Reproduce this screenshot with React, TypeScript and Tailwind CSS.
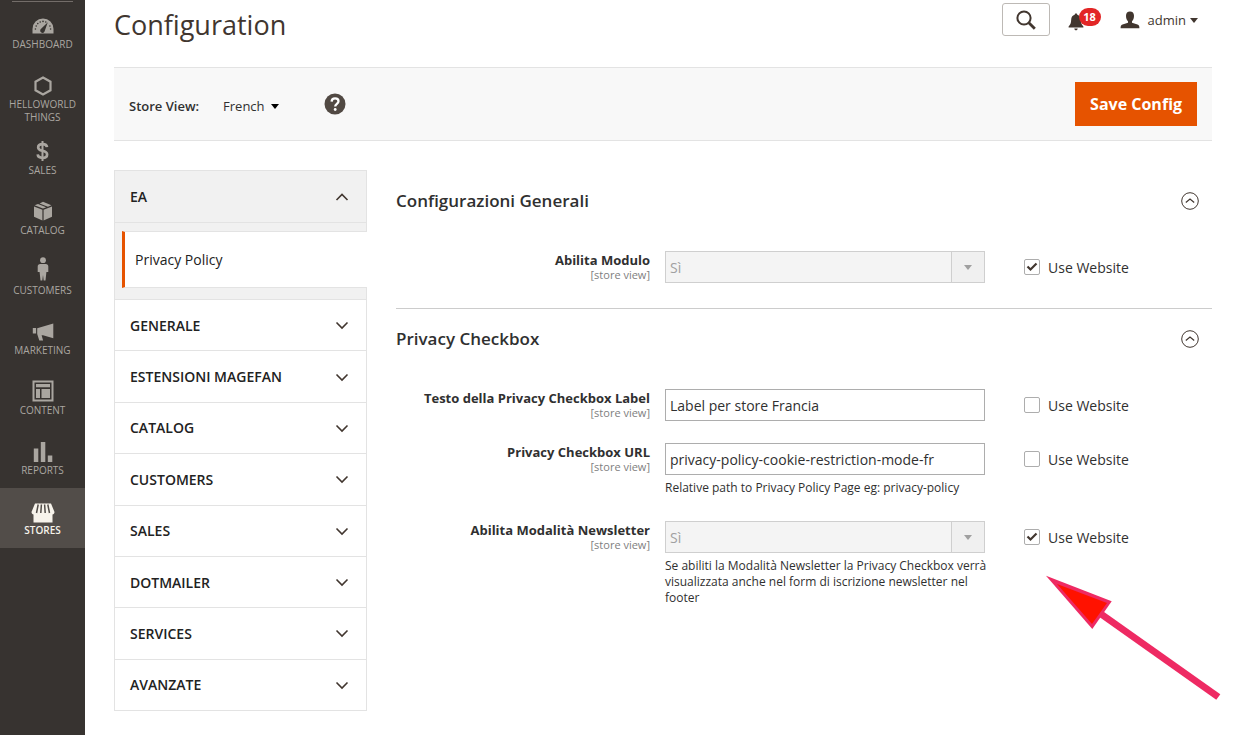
import { useState } from "react";
import type { ReactNode } from "react";
import clsx from "clsx";

const DashboardIcon = () => (
  <svg width="22" height="16" viewBox="0 0 22 16" fill="currentColor">
    <path d="M11 0.5A10.5 10.5 0 0 0 .5 11v4.5h21V11A10.5 10.5 0 0 0 11 .5z" />
    <g fill="#373330">
      <circle cx="3.4" cy="11" r="0.8" />
      <circle cx="4.2" cy="8" r="0.8" />
      <circle cx="5.8" cy="5.6" r="0.8" />
      <circle cx="8.2" cy="4" r="0.8" />
      <circle cx="11" cy="3.4" r="0.8" />
      <circle cx="13.8" cy="4" r="0.8" />
      <circle cx="17.9" cy="8" r="0.8" />
      <circle cx="18.6" cy="11" r="0.8" />
      <path d="M15.8 4.2L9.4 10.6a2.3 2.3 0 1 0 3.4 2.2z" />
    </g>
  </svg>
);

const HexagonIcon = () => (
  <svg width="18" height="20" viewBox="0 0 18 20" fill="none" stroke="currentColor" strokeWidth="2.2">
    <path d="M9 1.5L16.5 5.7v8.6L9 18.5 1.5 14.3V5.7z" />
  </svg>
);

const DollarIcon = () => (
  <svg width="13" height="22" viewBox="0 0 13 22" fill="none" stroke="currentColor">
    <path d="M11 6.2C10.8 4 9 3.2 6.6 3.2 4 3.2 2.2 4.4 2.2 6.4c0 2.2 2 2.8 4.3 3.4 2.6.6 4.6 1.3 4.6 3.6 0 2.1-1.9 3.4-4.5 3.4S1.9 15.8 1.7 13.4" strokeWidth="2.7" />
    <path d="M6.500 0v20" strokeWidth="2" />
  </svg>
);

const CatalogIcon = () => (
  <svg width="20" height="22" viewBox="0 0 20 22" fill="currentColor">
    <path d="M1 5.500l8.400 3.300v10.700L1 15.700zM19 5.500l-8.400 3.300v10.700l8.400-3.800z" />
    <path d="M1.600 4.300L5 3l8.200 3.300L10 7.600zM6.600 2.400L10 .8l8.400 3.500-3.500 1.400z" />
  </svg>
);

const CustomersIcon = () => (
  <svg width="12" height="30" viewBox="0 0 12 30" fill="currentColor">
    <circle cx="6" cy="3.200" r="2.900" />
    <path d="M3.200 7h5.600C10.400 7 11.300 8 11.300 9.600V15H9.400l-.9 8.500H6.700L6 18l-.7 5.500H3.500L2.600 15H.7V9.600C.7 8 1.600 7 3.200 7z" />
  </svg>
);

const MarketingIcon = () => (
  <svg width="22" height="18" viewBox="0 0 22 18" fill="currentColor">
    <path d="M21.300.6v14.600L11 12.200H9.600l1.500 5.200H7.300L5.200 11V5.300zM.8 5h3.300v5.500H.8z" />
  </svg>
);

const ContentIcon = () => (
  <svg width="22" height="24" viewBox="0 0 22 24" fill="currentColor">
    <path fillRule="evenodd" d="M.5.500h21v21H.5zM2.500 2.500v17h17v-17z" />
    <path d="M4 4h14v3.200H4zM4 9h4v9H4zM9.500 9H18v9H9.500z" />
  </svg>
);

const ReportsIcon = () => (
  <svg width="20" height="22" viewBox="0 0 20 22" fill="currentColor">
    <path d="M.8 7.500h4.500V21H.8zM7.800 1h4.500v20H7.800zM14.800 14.500h4.500V21h-4.500z" />
  </svg>
);

const StoresIcon = () => (
  <svg width="24" height="22" viewBox="0 -2 24 22" fill="currentColor">
    <path d="M4 .5h16L23.500 9c0 1.500-1 2.400-2 2.500v8h-19v-8C1.500 11.400.5 10.500.5 9z" />
    <path d="M7.200 1.500L5.500 10M10.400 1.500L9.800 10M13.600 1.500l.6 8.500M16.800 1.500l1.700 8.500" stroke="#524d49" strokeWidth="1.500" />
  </svg>
);

const Chevron = ({ up = false }: { up?: boolean }) => (
  <svg width="14" height="14" viewBox="0 0 14 14" fill="none" stroke="#41362f" strokeWidth="1.600" aria-hidden="true">
    <path d={up ? "M1.500 10L7 4.500 12.500 10" : "M1.500 4.500L7 10l5.500-5.500"} />
  </svg>
);

const Caret = ({ className }: { className?: string }) => (
  <svg width="8" height="8" viewBox="0 0 8 8" fill="currentColor" className={className} aria-hidden="true">
    <path d="M0 2h8L4 7z" />
  </svg>
);

const menu = [
  { label: "Dashboard", icon: <DashboardIcon /> },
  { label: "Helloworld Things", icon: <HexagonIcon /> },
  { label: "Sales", icon: <DollarIcon /> },
  { label: "Catalog", icon: <CatalogIcon /> },
  { label: "Customers", icon: <CustomersIcon /> },
  { label: "Marketing", icon: <MarketingIcon /> },
  { label: "Content", icon: <ContentIcon /> },
  { label: "Reports", icon: <ReportsIcon /> },
  { label: "Stores", icon: <StoresIcon />, active: true },
];

const tabs = [
  "Generale",
  "Estensioni Magefan",
  "Catalog",
  "Customers",
  "Sales",
  "Dotmailer",
  "Services",
  "Avanzate",
];

const Sidebar = () => (
  <nav className="w-[85px] shrink-0 bg-[#373330] pt-px">
    <div className="mx-3 border-t border-[#736d69]" />
    {menu.map((item) => (
      <a
        key={item.label}
        href="#"
        className={clsx(
          "flex min-h-[60px] flex-col items-center pt-3 pb-1 text-center text-[10px] leading-[13px] uppercase",
          item.active ? "bg-[#524d49] font-semibold text-[#f7f3eb]" : "font-medium text-[#aaa6a0]"
        )}
      >
        <span className="flex h-6 items-center">{item.icon}</span>
        <span className="px-1">{item.label}</span>
      </a>
    ))}
  </nav>
);

const Header = () => (
  <header className="flex h-[67px] items-start justify-between">
    <h1 className="pt-1 text-[27px] leading-[42px] text-[#41362f]">Configuration</h1>
    <div className="flex h-[39px] items-center pr-[14px]">
      <button
        aria-label="Search"
        className="flex h-[33px] w-12 items-center justify-center rounded-[3px] border border-[#bdb9b5]"
      >
        <svg width="20" height="20" viewBox="0 0 20 20" fill="none" stroke="#41362f">
          <circle cx="8" cy="8" r="6.600" strokeWidth="2" />
          <path d="M12.800 12.800l6 6" strokeWidth="2.800" />
        </svg>
      </button>
      <button aria-label="Notifications" className="relative ml-[18px] h-8 w-[33px]">
        <svg width="16" height="18" viewBox="0 0 16 18" fill="#41362f" className="mt-1">
          <path d="M8 .5c-.8 0-1.300.5-1.300 1.200C4.300 2.300 3.200 4.200 3.200 6.500 3.200 10.500 2 12 .6 13.400V14.500h14.800v-1.100C14 12 12.800 10.500 12.800 6.500c0-2.300-1.100-4.200-3.500-4.800C9.300 1 8.800.500 8 .500zM6.300 15.500h3.400C9.600 16.700 9 17.300 8 17.300s-1.600-.6-1.700-1.800z" />
        </svg>
        <span className="absolute top-1 right-0 h-[18px] w-[22px] rounded-full bg-[#e22626] text-center text-[11px] leading-[18px] font-bold text-white">
          18
        </span>
      </button>
      <button className="ml-[19px] flex items-center text-[13px] leading-5 text-[#41362f]">
        <svg width="20" height="18" viewBox="0 0 20 18" fill="currentColor" className="mr-2">
          <path d="M10 .5c-2.500 0-4 1.500-4 4.200 0 2.300.7 4.300 2 5.500v1.600L2.500 13.500C1 14 .6 14.800.6 17.200h18.800c0-2.400-.4-3.200-1.900-3.700L12 11.800v-1.600c1.300-1.200 2-3.200 2-5.500C14 2 12.500.500 10 .500z" />
        </svg>
        admin
        <Caret className="ml-1" />
      </button>
    </div>
  </header>
);

const StoreBar = () => (
  <div className="flex h-[74px] items-center border-y border-[#e3e3e3] bg-[#f8f8f8] px-[15px]">
    <div className="flex items-center pt-1 text-[13px] leading-5 text-[#303030]">
      <label htmlFor="store-view" className="font-semibold">
        Store View:
      </label>
      <div className="relative ml-6 flex items-center">
        <select id="store-view" className="appearance-none pr-[14px]">
          <option>French</option>
        </select>
        <Caret className="pointer-events-none absolute right-0 text-black" />
      </div>
    </div>
    <button aria-label="Help" className="ml-[45px]">
      <svg width="22" height="22" viewBox="0 0 22 22" fill="none">
        <circle cx="11" cy="11" r="10.500" fill="#514943" />
        <path d="M7.600 8.600C7.700 6.500 9 5.300 11.100 5.300c2.100 0 3.400 1.100 3.400 2.900 0 2.600-3.300 2.700-3.300 5.300" stroke="#fff" strokeWidth="2.300" />
        <circle cx="11.200" cy="16.500" r="1.400" fill="#fff" />
      </svg>
    </button>
    <button className="ml-auto h-11 bg-[#e65300] px-[15px] text-base font-bold text-white">
      Save Config
    </button>
  </div>
);

const ConfigTabs = () => (
  <nav className="w-[253px] shrink-0 text-[#222222]">
    <div className="border-x border-t border-[#e3e3e3] bg-[#f1f1f1]">
      <button className="flex h-[52px] w-full items-center justify-between border-b border-[#e3e3e3] pr-[17px] pl-[15px] text-[14px] font-semibold">
        EA
        <Chevron up />
      </button>
      <div className="-mr-px pt-2 pb-[11px] pl-[7px]">
        <a
          href="#"
          className="flex h-[57px] items-center border-y border-l-[3px] border-y-[#e3e3e3] border-l-[#e65300] bg-white pl-[10px] text-[14px] font-medium"
        >
          Privacy Policy
        </a>
      </div>
    </div>
    <div className="flex min-h-[412px] flex-col divide-y divide-[#e3e3e3] border border-[#e3e3e3]">
      {tabs.map((tab) => (
        <button
          key={tab}
          className="flex min-h-12 flex-1 items-center justify-between pr-[17px] pl-[15px] text-[14px] font-semibold uppercase"
        >
          {tab}
          <Chevron />
        </button>
      ))}
    </div>
  </nav>
);

const Section = ({ title, children }: { title: string; children: ReactNode }) => (
  <section>
    <div className="flex items-center justify-between pr-[13px]">
      <h2 className="text-[17px] leading-6 font-semibold text-[#303030]">{title}</h2>
      <button aria-label={`Collapse ${title}`}>
        <svg width="18" height="18" viewBox="0 0 18 18" fill="none" stroke="#41362f">
          <circle cx="9" cy="9" r="8.300" />
          <path d="M4.800 10.500L9 7l4.200 3.500" strokeWidth="1.200" />
        </svg>
      </button>
    </div>
    <div className="mt-[38px] flex flex-col gap-[22px]">{children}</div>
  </section>
);

type FieldProps = {
  id: string;
  label: string;
  value: string;
  type: "select" | "text";
  inherit?: boolean;
  note?: string;
  children?: ReactNode;
};

const Field = ({ id, label, value, type, inherit = false, note, children }: FieldProps) => {
  const [checked, setChecked] = useState(inherit);

  return (
    <div className="grid grid-cols-[269fr_359fr_188fr] text-[#303030]">
      <div className="pr-[15px] text-right">
        <label htmlFor={id} className="block text-[13px] leading-[18px] font-bold">
          {label}
        </label>
        <span className="block text-[11px] leading-3 text-[#808080]">[store view]</span>
      </div>
      <div className="pr-[39px]">
        {type === "select" ? (
          <div className="relative text-[#a0a0a0]">
            <select
              id={id}
              disabled={checked}
              className="h-8 w-full appearance-none border border-[#cfcfcf] bg-[#f4f4f4] pl-1 text-[14px]"
            >
              <option>{value}</option>
            </select>
            <span className="pointer-events-none absolute inset-y-px right-px flex w-[33px] items-center justify-center border-l border-[#cfcfcf] bg-[#f0f0f0]">
              <Caret />
            </span>
          </div>
        ) : (
          <input
            id={id}
            type="text"
            defaultValue={value}
            className="block h-8 w-full border border-[#adadad] bg-white pl-1 text-[14px]"
          />
        )}
        {note && <p className="-mr-2 pt-[5px] pb-[3px] text-[12px] leading-4">{note}</p>}
      </div>
      <div className="relative">
        <label className="flex h-8 items-center gap-2 text-[14px]">
          <span className="relative flex">
            <input
              type="checkbox"
              checked={checked}
              onChange={() => setChecked(!checked)}
              className="size-4 appearance-none rounded-[2px] border border-[#adadad] bg-white"
            />
            {checked && (
              <svg width="16" height="16" viewBox="0 0 16 16" fill="none" stroke="#41362f" strokeWidth="2.200" className="pointer-events-none absolute inset-0">
                <path d="M3.500 7.500l3 3 6-6" />
              </svg>
            )}
          </span>
          Use Website
        </label>
        {children}
      </div>
    </div>
  );
};

const PointerArrow = () => (
  <svg width="177" height="127" viewBox="0 0 177 127" className="pointer-events-none absolute top-[54px] left-[21px]" aria-hidden="true">
    <path d="M56 39L173.300 122" stroke="#ee2a63" strokeWidth="7" />
    <path d="M1 .7L66.700 26.300 47.300 54z" fill="#ee2a63" />
    <path d="M12 9L62 28 47 49z" fill="#ff1200" />
  </svg>
);

const App = () => {
  return (
    <div className="flex min-h-screen bg-white font-['Open_Sans',sans-serif]">
      <Sidebar />
      <div className="min-w-0 flex-1 px-[29px]">
        <Header />
        <StoreBar />
        <div className="flex gap-[29px] pt-[29px]">
          <ConfigTabs />
          <main className="min-w-0 flex-1 pt-[19px]">
            <Section title="Configurazioni Generali">
              <Field id="enabled" label="Abilita Modulo" value="Sì" type="select" inherit />
            </Section>
            <hr className="mt-[25px] mb-[18px] border-[#cccccc]" />
            <Section title="Privacy Checkbox">
              <Field
                id="checkbox-label"
                label="Testo della Privacy Checkbox Label"
                value="Label per store Francia"
                type="text"
              />
              <Field
                id="checkbox-url"
                label="Privacy Checkbox URL"
                value="privacy-policy-cookie-restriction-mode-fr"
                type="text"
                note="Relative path to Privacy Policy Page eg: privacy-policy"
              />
              <Field
                id="newsletter"
                label="Abilita Modalità Newsletter"
                value="Sì"
                type="select"
                inherit
                note="Se abiliti la Modalità Newsletter la Privacy Checkbox verrà visualizzata anche nel form di iscrizione newsletter nel footer"
              >
                <PointerArrow />
              </Field>
            </Section>
          </main>
        </div>
      </div>
    </div>
  );
};

export default App;
